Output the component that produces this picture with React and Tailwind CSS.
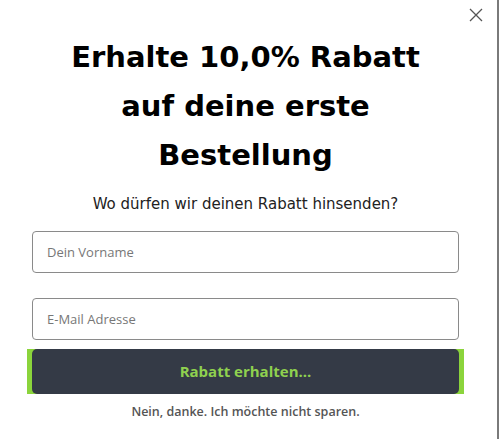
import React from 'react';

function CloseIcon() {
  return (
    <svg width="14" height="14" viewBox="0 0 14 14" fill="none" stroke="#555" strokeWidth="1.3">
      <path d="M1 1L13 13M13 1L1 13" />
    </svg>
  );
}

export default function App() {
  return (
    <div className="flex h-[439px] w-[500px] bg-white" style={{ fontFamily: '"DejaVu Sans", sans-serif' }}>
      <div className="relative flex w-[491px] flex-col items-center">
        <button className="absolute right-[8px] top-[8px]">
          <CloseIcon />
        </button>

        <h1 className="mt-[33px] w-[380px] text-center text-[29px] font-bold leading-[49px] text-black">
          Erhalte 10,0% Rabatt auf deine erste Bestellung
        </h1>

        <p className="mt-[14px] text-[15px] leading-[20px] text-[#222]">
          Wo dürfen wir deinen Rabatt hinsenden?
        </p>

        <div className="mt-[17px] flex w-[427px] flex-col gap-[25px]">
          <input
            className="h-[42px] w-full rounded-[4px] border border-[#8a8a8a] px-[14px] text-[13px] text-[#333] placeholder:text-[#777] outline-none"
            placeholder="Dein Vorname"
            style={{ fontFamily: '"Open Sans", sans-serif' }}
          />
          <input
            className="h-[42px] w-full rounded-[4px] border border-[#8a8a8a] px-[14px] text-[13px] text-[#333] placeholder:text-[#777] outline-none"
            placeholder="E-Mail Adresse"
            style={{ fontFamily: '"Open Sans", sans-serif' }}
          />
        </div>

        <div className="mt-[9px] flex w-[437px] bg-[#8bd43c] px-[5px]">
          <button
            className="h-[45px] w-full rounded-[5px] bg-[#343a46] text-[15px] font-bold text-[#8fd14f]"
            style={{ fontFamily: '"Open Sans", sans-serif' }}
          >
            Rabatt erhalten...
          </button>
        </div>

        <p
          className="mt-[9px] text-[12.5px] font-semibold text-[#555]"
          style={{ fontFamily: '"Open Sans", sans-serif' }}
        >
          Nein, danke. Ich möchte nicht sparen.
        </p>
      </div>
      <div className="w-[6px]" />
      <div className="w-[2px] bg-[#7a7a7a]" />
      <div className="w-[1px] bg-white" />
    </div>
  );
}
